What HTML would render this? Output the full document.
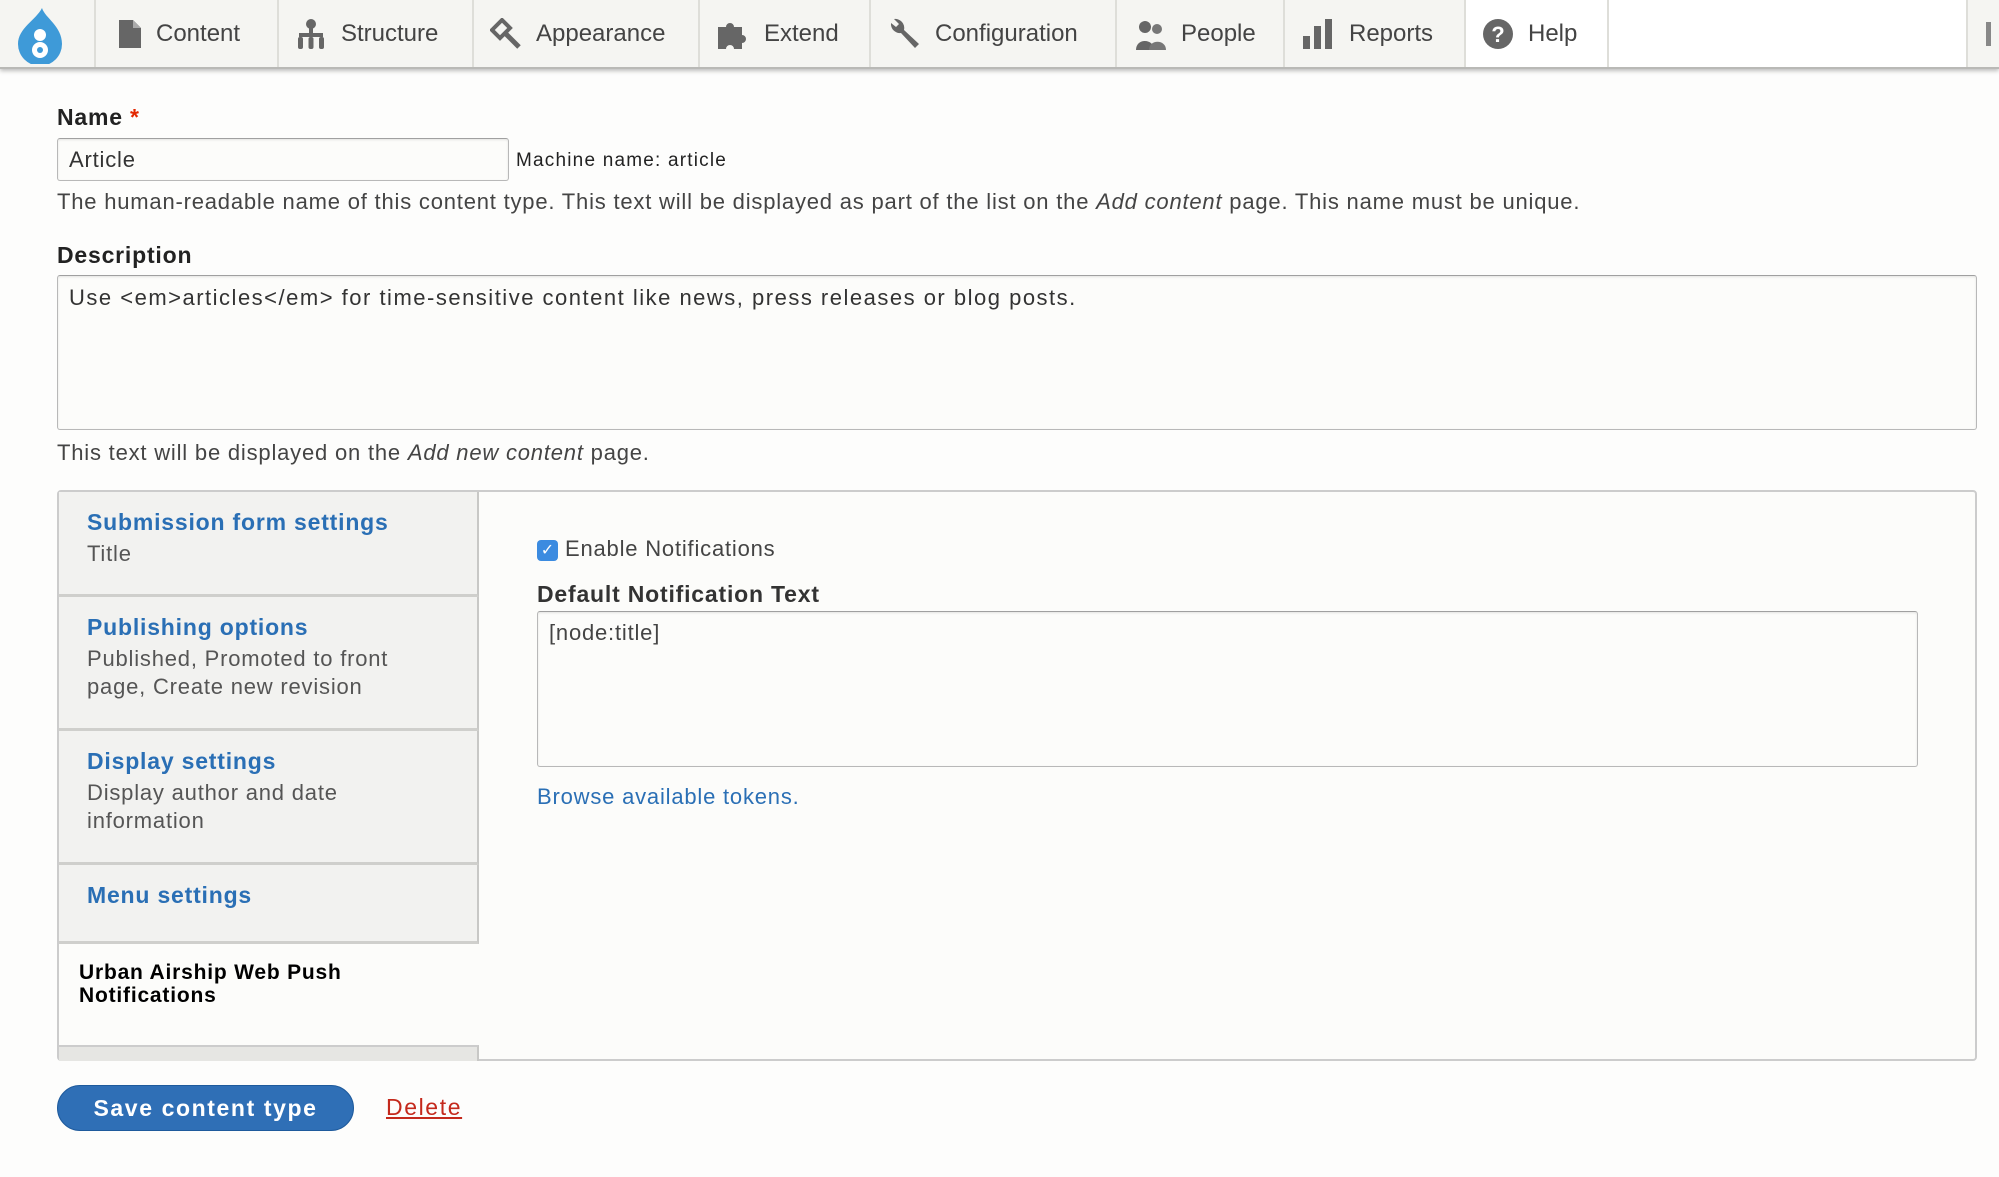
<!DOCTYPE html>
<html><head><meta charset="utf-8"><style>
*{box-sizing:border-box;margin:0;padding:0}
body{width:1999px;height:1177px;background:#fdfdfc;font-family:"Liberation Sans",sans-serif;color:#333;position:relative;overflow:hidden;font-size:22px;letter-spacing:.8px}
.tb{position:absolute;left:0;top:0;width:1999px;height:69px;background:#fff;border-bottom:2px solid #b9b9b6;box-shadow:0 2px 4px rgba(0,0,0,.25);letter-spacing:0}
.tab{position:absolute;top:0;height:67px;background:#f5f5f2;border-right:2px solid #deded9;display:flex;align-items:center;font-size:24px;color:#444}
.tab svg{margin-right:14px;flex:none}
.a{position:absolute;white-space:nowrap}
.lbl{font-weight:bold;color:#222;font-size:23px}
.in{position:absolute;border:1px solid #b8b8b8;border-top-color:#a0a0a0;border-radius:3px;background:#fcfcfa;box-shadow:inset 0 1px 2px rgba(0,0,0,.1)}
.vt{position:absolute;left:57px;top:490px;width:1920px;height:571px;border:2px solid #ccc;border-radius:4px;background:#fcfcfa}
.mi{position:absolute;left:0;width:420px;background:#f2f2f0;border-right:2px solid #c8c8c6;border-bottom:3px solid #cfcfcc}
.mi b{position:absolute;left:28px;color:#2a6fb5;font-size:23px}
.mi span{position:absolute;left:28px;color:#555;font-size:22px;line-height:28px}
a{color:#2a6fb5;text-decoration:none}
</style></head><body>
<div class="tb">
 <div class="tab" style="left:0;width:96px;justify-content:center">
  <svg width="56" height="60" viewBox="0 0 56 60"><path d="M30 4 C33 14 50 22 50 40 A22 22 0 0 1 6 40 C6 24 24 16 30 4Z" fill="#3e9ad8"/><circle cx="28" cy="31" r="6" fill="#fff"/><circle cx="28" cy="46" r="8" fill="#fff"/><circle cx="28" cy="46" r="3" fill="#3e9ad8"/></svg>
 </div>
 <div class="tab" style="left:96px;width:183px;padding-left:22px"><svg width="24" height="30" viewBox="0 0 24 30"><path d="M1 1h14l8 8v20H1z" fill="#666"/><path d="M15 1v8h8" fill="#aaa"/></svg>Content</div>
 <div class="tab" style="left:279px;width:195px;padding-left:16px"><svg width="32" height="30" viewBox="0 0 32 30"><circle cx="16" cy="5" r="5" fill="#666"/><rect x="14" y="8" width="4" height="9" fill="#666"/><rect x="4" y="14" width="24" height="4" fill="#666"/><rect x="3" y="18" width="5" height="12" rx="2" fill="#666"/><rect x="13.5" y="18" width="5" height="12" rx="2" fill="#666"/><rect x="24" y="18" width="5" height="12" rx="2" fill="#666"/></svg>Structure</div>
 <div class="tab" style="left:474px;width:226px;padding-left:16px"><svg width="32" height="32" viewBox="0 0 32 32"><path d="M2 12 L12 2 L20 10 L10 20Z" fill="none" stroke="#666" stroke-width="4"/><path d="M16 16 L29 29" stroke="#666" stroke-width="5"/></svg>Appearance</div>
 <div class="tab" style="left:700px;width:171px;padding-left:16px"><svg width="34" height="30" viewBox="0 0 34 30"><path d="M2 8h8a4 4 0 1 1 8 0h8v8a4 4 0 1 1 0 8v6H18a4 4 0 1 0-8 0H2z" fill="#666"/></svg>Extend</div>
 <div class="tab" style="left:871px;width:246px;padding-left:16px"><svg width="34" height="34" viewBox="0 0 34 34"><path d="M4 6 A9 9 0 0 0 14 16 L28 31 L32 27 L17 13 A9 9 0 0 0 7 2 L12 7 L9 10Z" fill="#666"/></svg>Configuration</div>
 <div class="tab" style="left:1117px;width:168px;padding-left:16px"><svg width="34" height="32" viewBox="0 0 34 32"><circle cx="12" cy="9" r="6" fill="#666"/><path d="M3 32 C3 20 21 20 21 32Z" fill="#666"/><circle cx="24" cy="11" r="5" fill="#777"/><path d="M16 32 C16 21 33 21 33 32Z" fill="#777"/></svg>People</div>
 <div class="tab" style="left:1285px;width:181px;padding-left:16px"><svg width="34" height="32" viewBox="0 0 34 32"><rect x="2" y="18" width="7" height="13" fill="#666"/><rect x="13" y="8" width="7" height="23" fill="#666"/><rect x="24" y="1" width="7" height="30" fill="#666"/></svg>Reports</div>
 <div class="tab" style="left:1466px;width:143px;padding-left:16px;background:#fff"><svg width="32" height="32" viewBox="0 0 32 32"><circle cx="16" cy="16" r="15" fill="#666"/><text x="16" y="24" font-size="22" font-weight="bold" fill="#fff" text-anchor="middle" font-family="Liberation Sans">?</text></svg>Help</div>
 <div style="position:absolute;left:1966px;top:0;width:33px;height:67px;background:#f5f5f2;border-left:2px solid #deded9"><div style="position:absolute;left:18px;top:22px;width:5px;height:24px;background:#888"></div></div>
</div>

<div class="a lbl" style="left:57px;top:104px">Name <span style="color:#e32700">*</span></div>
<div class="in" style="left:57px;top:138px;width:452px;height:43px"></div>
<div class="a" style="left:69px;top:147px;color:#333">Article</div>
<div class="a" style="left:516px;top:150px;font-size:19px;color:#222;letter-spacing:1.2px">Machine name: article</div>
<div class="a" style="left:57px;top:189px;color:#444">The human-readable name of this content type. This text will be displayed as part of the list on the <i>Add content</i> page. This name must be unique.</div>
<div class="a lbl" style="left:57px;top:242px">Description</div>
<div class="in" style="left:57px;top:275px;width:1920px;height:155px"></div>
<div class="a" style="left:69px;top:285px;letter-spacing:1.5px">Use &lt;em&gt;articles&lt;/em&gt; for time-sensitive content like news, press releases or blog posts.</div>
<div class="a" style="left:57px;top:440px;color:#444">This text will be displayed on the <i>Add new content</i> page.</div>

<div class="vt">
 <div class="mi" style="top:0;height:105px"><b style="top:17px">Submission form settings</b><span style="top:48px">Title</span></div>
 <div class="mi" style="top:105px;height:134px"><b style="top:17px">Publishing options</b><span style="top:48px">Published, Promoted to front<br>page, Create new revision</span></div>
 <div class="mi" style="top:239px;height:134px"><b style="top:17px">Display settings</b><span style="top:48px">Display author and date<br>information</span></div>
 <div class="mi" style="top:373px;height:79px"><b style="top:17px">Menu settings</b></div>
 <div style="position:absolute;left:0;top:452px;width:420px;height:101px;background:#fcfcfa"><div class="a" style="left:20px;top:17px;font-weight:bold;font-size:21px;color:#000;line-height:23px">Urban Airship Web Push<br>Notifications</div></div>
 <div style="position:absolute;left:0;top:553px;width:420px;height:16px;background:#e6e6e3;border-top:2px solid #ccc;border-right:2px solid #c8c8c6"></div>
 <div style="position:absolute;left:478px;top:48px;width:21px;height:21px;background:#3b8be0;border-radius:4px;color:#fff;font-size:16px;text-align:center;line-height:21px;letter-spacing:0">✓</div>
 <div class="a" style="left:506px;top:44px;color:#444">Enable Notifications</div>
 <div class="a lbl" style="left:478px;top:89px;color:#333">Default Notification Text</div>
 <div class="in" style="left:478px;top:119px;width:1381px;height:156px"></div>
 <div class="a" style="left:490px;top:128px;color:#444">[node:title]</div>
 <div class="a" style="left:478px;top:292px"><a href="#">Browse available tokens.</a></div>
</div>

<div class="a" style="left:57px;top:1085px;width:297px;height:46px;background:#2f6fb6;border:1px solid #1e5a9c;border-radius:24px;color:#fff;font-weight:bold;font-size:23px;text-align:center;line-height:44px;letter-spacing:1.6px">Save content type</div>
<div class="a" style="left:386px;top:1094px;color:#c4291c;text-decoration:underline;font-size:23px;letter-spacing:1.6px">Delete</div>
</body></html>
